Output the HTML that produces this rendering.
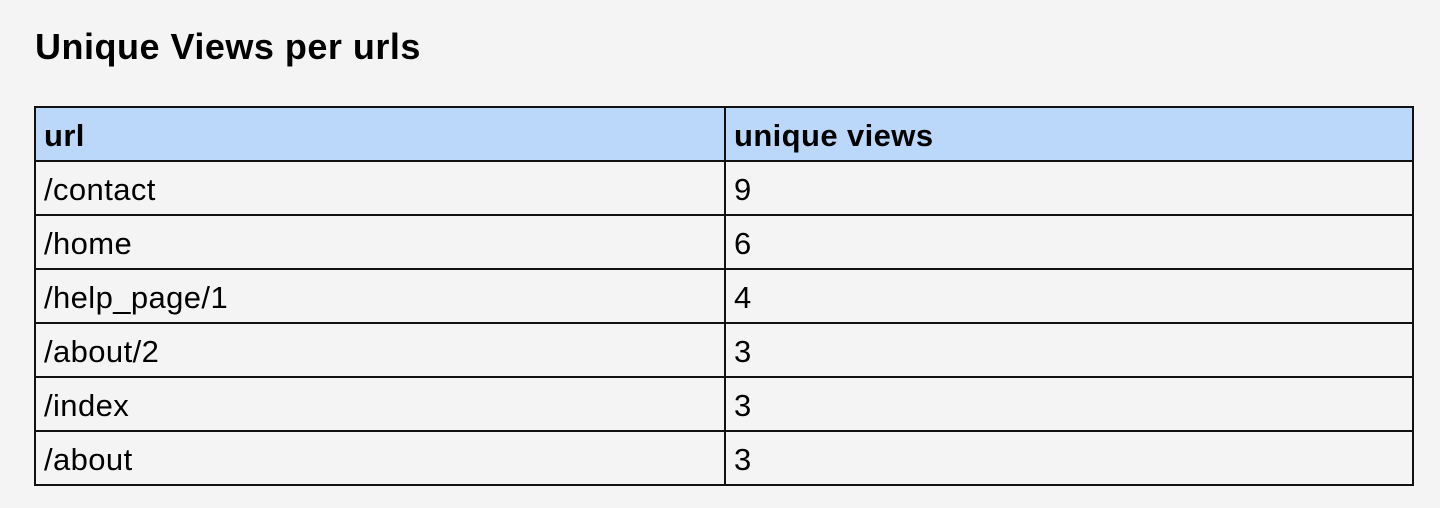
<!DOCTYPE html>
<html><head><style>
html,body{margin:0;background:#f4f4f4;width:1440px;height:508px;overflow:hidden;font-family:"Liberation Sans",sans-serif;color:#000}
h1{position:absolute;left:35px;top:27px;margin:0;font-size:36px;font-weight:bold;line-height:40px;letter-spacing:0.5px}
table{position:absolute;left:34px;top:106px;border-collapse:collapse;width:1380px}
td,th{border:2px solid #111;height:54px;box-sizing:border-box;padding:4px 0 0 8px;font-size:31px;letter-spacing:0.4px;text-align:left;vertical-align:middle}
th{background:#bbd7f9;font-weight:bold}
td:first-child,th:first-child{width:690px}
</style></head><body>
<h1>Unique Views per urls</h1>
<table>
<tr><th>url</th><th>unique views</th></tr>
<tr><td>/contact</td><td>9</td></tr>
<tr><td>/home</td><td>6</td></tr>
<tr><td>/help_page/1</td><td>4</td></tr>
<tr><td>/about/2</td><td>3</td></tr>
<tr><td>/index</td><td>3</td></tr>
<tr><td>/about</td><td>3</td></tr>
</table>
</body></html>
